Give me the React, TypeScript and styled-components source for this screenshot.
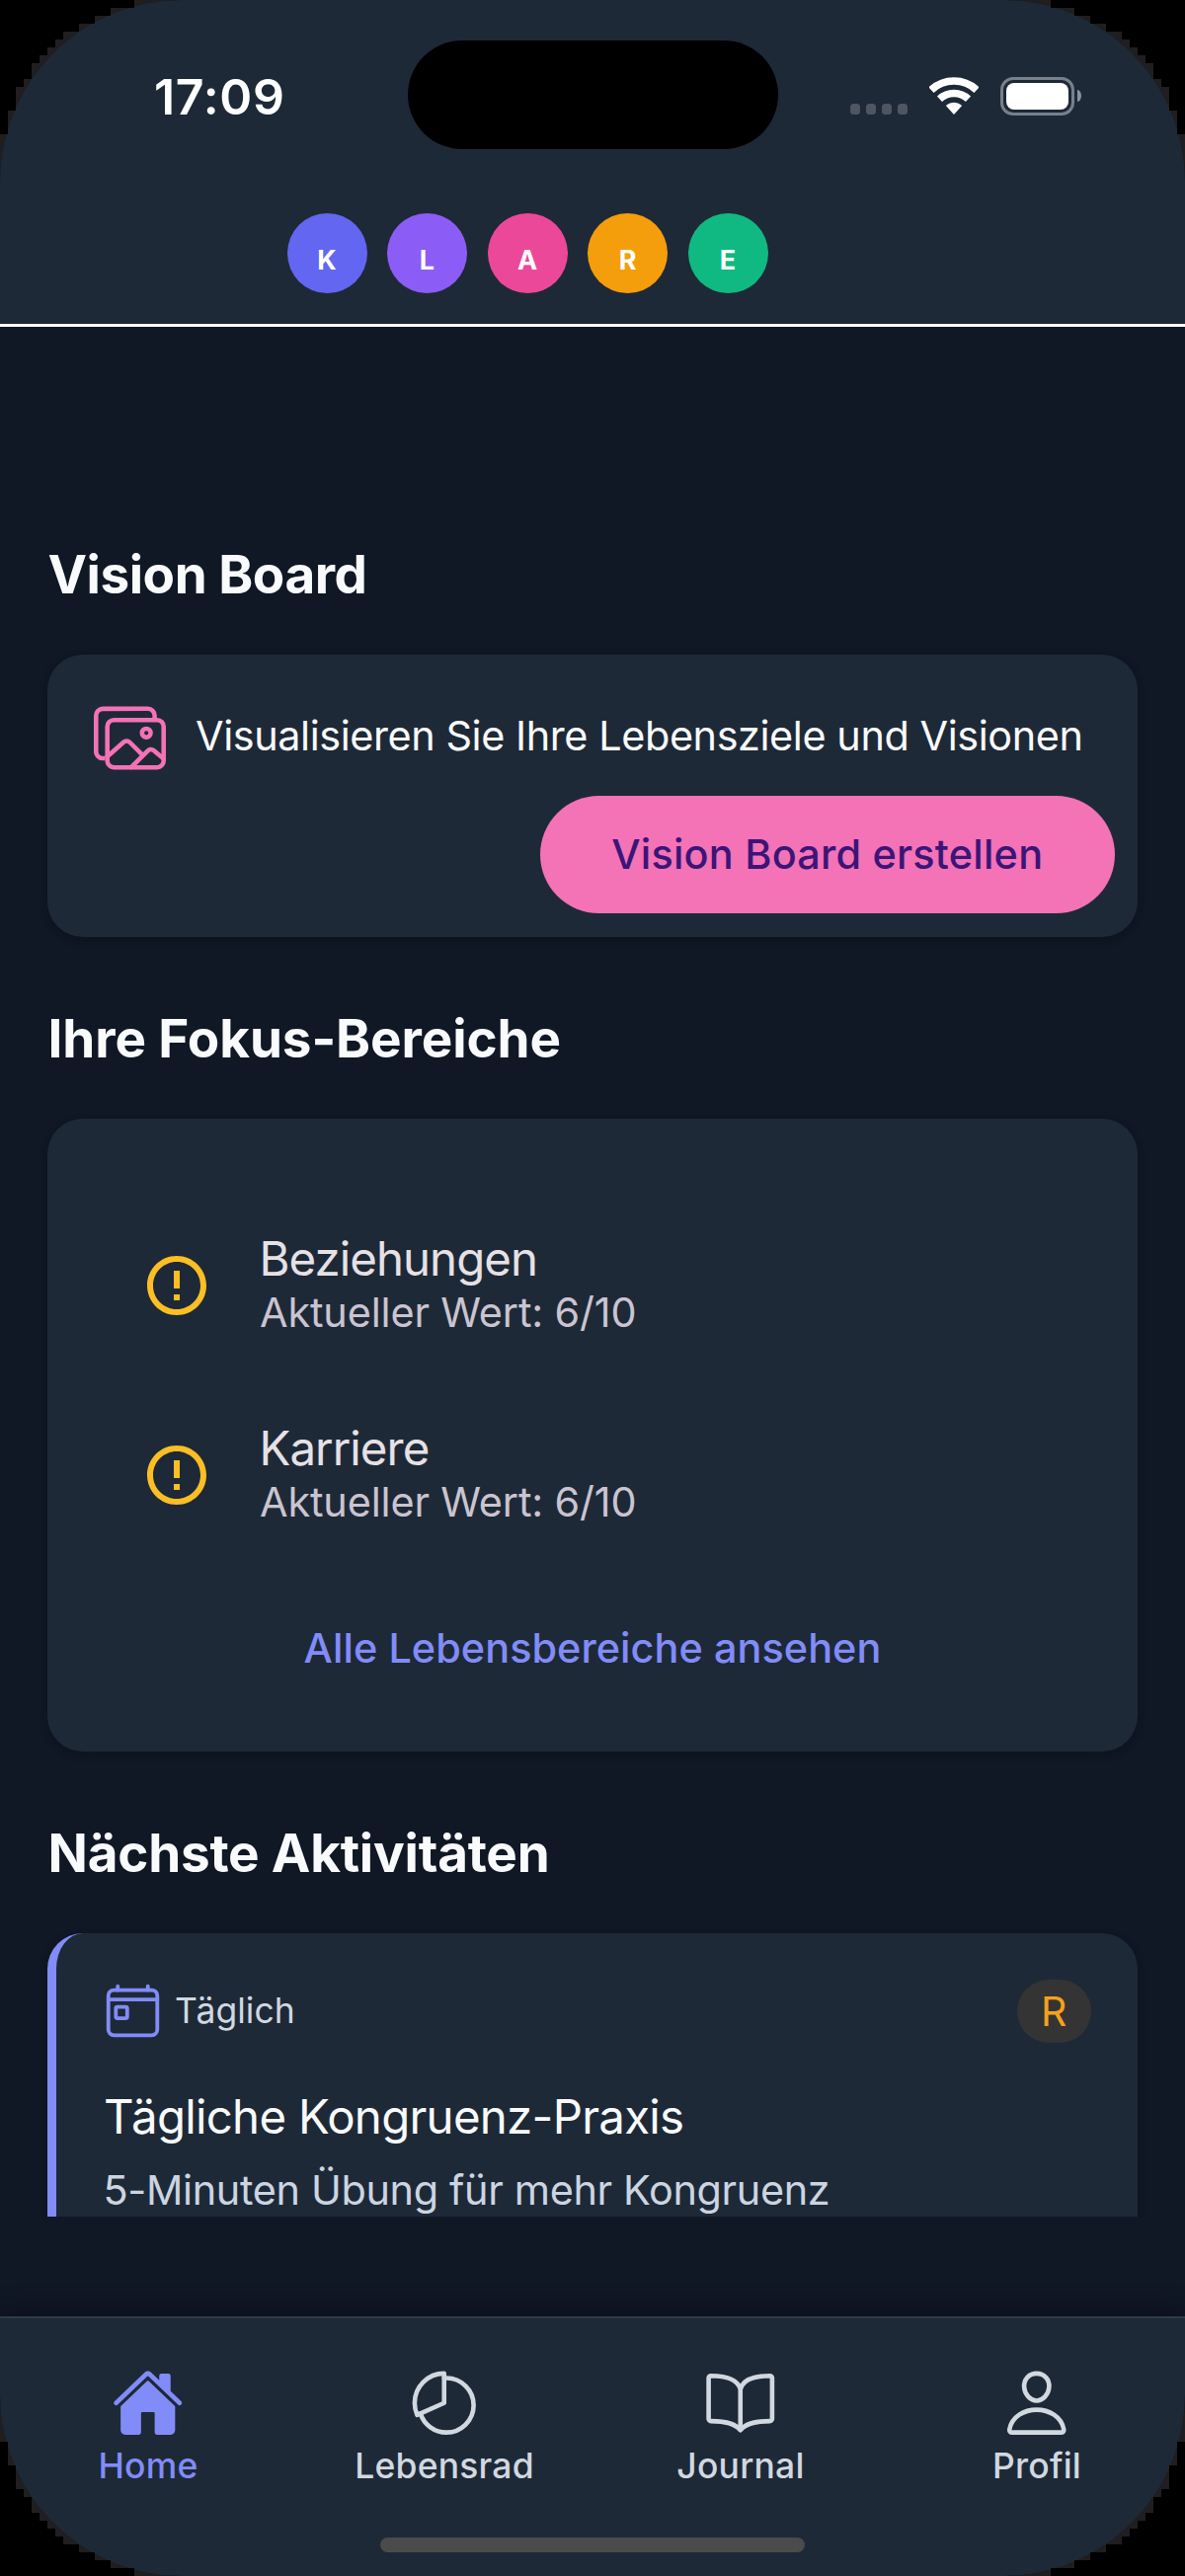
import React from "react";
import styled, { createGlobalStyle } from "styled-components";
import {
  IoBookOutline,
  IoHome,
  IoImagesOutline,
  IoPersonOutline,
  IoPieChartOutline,
  IoTodayOutline,
} from "react-icons/io5";
import { MdErrorOutline } from "react-icons/md";

const color = {
  page: "#101725",
  surface: "#1e2937",
  text: "#f9fafb",
  listTitle: "#e6e1e5",
  listText: "#cac4d0",
  muted: "#d1d8e0",
  primary: "#818cf8",
  pink: "#f472b6",
  warning: "#fbbf24",
};

const WIDTH = 1200;
const HEIGHT = 2609;

// Stepped outline of the top-left corner; the other three corners mirror it.
const cornerSteps: [number, number][] = [
  [0, 136], [8, 136], [8, 112], [16, 112], [16, 88], [24, 88], [24, 80], [32, 80],
  [32, 64], [40, 64], [40, 56], [48, 56], [48, 48], [56, 48], [56, 40], [64, 40],
  [64, 32], [80, 32], [80, 24], [96, 24], [96, 16], [112, 16], [112, 8], [136, 8], [136, 0],
];
const reversedSteps = [...cornerSteps].reverse();
const outline = [
  ...cornerSteps,
  ...reversedSteps.map(([x, y]) => [WIDTH - x, y]),
  ...cornerSteps.map(([x, y]) => [WIDTH - x, HEIGHT - y]),
  ...reversedSteps.map(([x, y]) => [x, HEIGHT - y]),
]
  .map(([x, y]) => `${x}px ${y}px`)
  .join(", ");

const GlobalStyle = createGlobalStyle`
  * { box-sizing: border-box; }
  body {
    margin: 0;
    background: #000;
    font-family: Inter, "Liberation Sans", sans-serif;
  }
`;

const Bezel = styled.div`
  width: ${WIDTH}px;
  height: ${HEIGHT}px;
  background: #201e1e;
  clip-path: polygon(${outline});
`;

const Phone = styled.div`
  height: 100%;
  display: flex;
  flex-direction: column;
  overflow: hidden;
  border-radius: 184px;
  background: ${color.page};
`;

const Header = styled.header`
  flex: none;
  height: 331px;
  border-bottom: 3px solid #fff;
  background: ${color.surface};
`;

const StatusBar = styled.div`
  height: 192px;
  display: grid;
  grid-template-columns: 1fr 375px 1fr;
  align-items: center;
`;

const Time = styled.div`
  padding: 3px 0 0 156px;
  color: #fff;
  font-size: 50px;
  font-weight: 600;
  line-height: 60px;
  letter-spacing: 0.7px;
`;

const Island = styled.div`
  height: 110px;
  border-radius: 55px;
  background: #000;
`;

const StatusIcons = styled.div`
  display: flex;
  align-items: center;
  padding: 2px 0 0 73px;
`;

const SignalDots = styled.div`
  display: flex;
  gap: 6px;
  margin: 27px 22px 0 0;
`;

const SignalDot = styled.span`
  width: 10px;
  height: 11px;
  border-radius: 3.5px;
  background: #4d5661;
`;

const WifiIcon = styled.svg`
  width: 50px;
  height: 38px;
  margin-right: 22px;
`;

const BatteryShell = styled.div`
  width: 75px;
  height: 39px;
  padding: 3px;
  border: 3px solid #77808b;
  border-radius: 13px;
`;

const BatteryFill = styled.div`
  height: 100%;
  border-radius: 8px;
  background: #fff;
`;

const BatteryTip = styled.div`
  width: 4px;
  height: 12px;
  margin-left: 3px;
  border-radius: 0 4px 4px 0 / 0 6px 6px 0;
  background: #8a929b;
`;

const PillarRow = styled.div`
  display: flex;
  gap: 20.5px;
  padding: 24px 0 0 290.5px;
`;

const Pillar = styled.div<{ $bg: string }>`
  width: 81px;
  height: 81px;
  display: flex;
  align-items: center;
  justify-content: center;
  padding-top: 14px;
  border-radius: 50%;
  background: ${(p) => p.$bg};
  color: #fff;
  font-size: 27px;
  font-weight: 700;
  line-height: 32px;
`;

const Content = styled.main`
  flex: none;
  height: 1914px;
  overflow: hidden;
  padding: 218.5px 48px 0;
`;

const Section = styled.section`
  margin-bottom: 71px;
`;

const Heading = styled.h2<{ $spacing: number }>`
  margin: 0 0 49px;
  padding-left: 0.5px;
  color: ${color.text};
  font-size: 53px;
  font-weight: 700;
  line-height: 64px;
  letter-spacing: ${(p) => p.$spacing}px;
`;

const Card = styled.div`
  border-radius: 36px;
  background: ${color.surface};
  box-shadow: 0 3px 9px rgba(0, 12, 12, 0.3);
`;

const VisionCard = styled(Card)`
  display: flex;
  flex-direction: column;
  padding: 48px 23.5px 23.5px 47px;
`;

const VisionRow = styled.div`
  display: flex;
  align-items: center;
  gap: 30px;
  margin-bottom: 22px;
  color: ${color.pink};
`;

const VisionText = styled.span`
  padding-bottom: 4px;
  color: ${color.text};
  font-size: 41.4px;
  line-height: 50px;
  letter-spacing: -0.42px;
  white-space: nowrap;
`;

const VisionButton = styled.button`
  align-self: flex-end;
  width: 581.5px;
  height: 119.5px;
  padding: 0;
  border: 0;
  border-radius: 60px;
  background: ${color.pink};
  color: #3b1578;
  font: 500 41.4px/50px Inter, "Liberation Sans", sans-serif;
  letter-spacing: 0.23px;
`;

const FocusCard = styled(Card)`
  display: flex;
  flex-direction: column;
  align-items: center;
  height: 641px;
  padding-top: 73px;
`;

const FocusRow = styled.div`
  align-self: stretch;
  height: 192px;
  display: flex;
  align-items: center;
  gap: 47.5px;
  padding-left: 95px;
  color: ${color.warning};
`;

const FocusTitle = styled.div`
  color: ${color.listTitle};
  font-size: 47.4px;
  line-height: 57px;
  letter-spacing: -0.95px;
`;

const FocusValue = styled.div`
  padding: 1px 0 3px 0.5px;
  color: ${color.listText};
  font-size: 41.4px;
  line-height: 50px;
  letter-spacing: -0.15px;
`;

const FocusLink = styled.a`
  margin-top: 54.5px;
  color: ${color.primary};
  font-size: 41.4px;
  font-weight: 500;
  line-height: 50px;
  letter-spacing: 0.05px;
`;

const ActivityCard = styled(Card)`
  height: 440px;
  padding: 47.5px 47.5px 0 47px;
  border-left: 9px solid ${color.primary};
`;

const ActivityTop = styled.div`
  height: 63.5px;
  display: flex;
  align-items: center;
  gap: 12px;
  margin-bottom: 46px;
  color: ${color.primary};
`;

const Frequency = styled.span`
  flex: 1;
  color: ${color.muted};
  font-size: 35.5px;
  line-height: 43px;
`;

const ActivityBadge = styled.span`
  width: 74.5px;
  height: 63.5px;
  display: flex;
  align-items: center;
  justify-content: center;
  border-radius: 36px;
  background: #333433;
  color: #f5a11b;
  font-size: 41px;
  line-height: 50px;
`;

const ActivityTitle = styled.div`
  margin-bottom: 21.5px;
  padding-left: 1px;
  color: ${color.text};
  font-size: 47.4px;
  line-height: 57px;
  letter-spacing: -0.72px;
`;

const ActivityText = styled.div`
  padding-left: 0.5px;
  color: #cbd5e1;
  font-size: 41.4px;
  line-height: 50px;
  letter-spacing: -0.34px;
`;

const TabBar = styled.nav`
  flex: none;
  height: 263px;
  margin-top: auto;
  border-top: 2px solid #303a47;
  background: ${color.surface};
  box-shadow: 0 -6px 24px rgba(0, 0, 0, 0.3);
`;

const Tabs = styled.div`
  display: grid;
  grid-template-columns: repeat(4, 1fr);
  padding-top: 48.5px;
`;

const Tab = styled.div<{ $active?: boolean }>`
  display: flex;
  flex-direction: column;
  align-items: center;
  gap: 6px;
  color: ${(p) => (p.$active ? color.primary : color.muted)};
`;

const TabLabel = styled.span`
  font-size: 35.5px;
  font-weight: 500;
  line-height: 43px;
  letter-spacing: 0.2px;
`;

const HomeIndicator = styled.div`
  width: 430px;
  height: 15px;
  margin: 51px auto 0;
  border-radius: 8px;
  background: #4b4b4b;
`;

const pillars = [
  { letter: "K", bg: "#6366f1" },
  { letter: "L", bg: "#8b5cf6" },
  { letter: "A", bg: "#ec4899" },
  { letter: "R", bg: "#f59e0b" },
  { letter: "E", bg: "#10b981" },
];

const focusAreas = [
  { name: "Beziehungen", value: "Aktueller Wert: 6/10" },
  { name: "Karriere", value: "Aktueller Wert: 6/10" },
];

const tabs = [
  { label: "Home", Icon: IoHome, active: true },
  { label: "Lebensrad", Icon: IoPieChartOutline },
  { label: "Journal", Icon: IoBookOutline },
  { label: "Profil", Icon: IoPersonOutline },
];

export default function App() {
  return (
    <Bezel>
      <GlobalStyle />
      <Phone>
        <Header>
          <StatusBar>
            <Time>17:09</Time>
            <Island />
            <StatusIcons>
              <SignalDots>
                <SignalDot />
                <SignalDot />
                <SignalDot />
                <SignalDot />
              </SignalDots>
              <WifiIcon viewBox="0 0 50 38" fill="none" stroke="#fff">
                <path d="M2 13.1A33.7 33.7 0 0 1 48 13.1" strokeWidth="7.6" />
                <path d="M10.5 22.2A21.2 21.2 0 0 1 39.5 22.2" strokeWidth="7.4" />
                <path
                  d="M25 37L17.8 29.1A11 11 0 0 1 32.2 29.1Z"
                  fill="#fff"
                  strokeWidth="1.4"
                  strokeLinejoin="round"
                />
              </WifiIcon>
              <BatteryShell>
                <BatteryFill />
              </BatteryShell>
              <BatteryTip />
            </StatusIcons>
          </StatusBar>
          <PillarRow>
            {pillars.map((p) => (
              <Pillar key={p.letter} $bg={p.bg}>
                {p.letter}
              </Pillar>
            ))}
          </PillarRow>
        </Header>

        <Content>
          <Section>
            <Heading $spacing={-0.47}>Vision Board</Heading>
            <VisionCard>
              <VisionRow>
                <IoImagesOutline size={73} />
                <VisionText>Visualisieren Sie Ihre Lebensziele und Visionen</VisionText>
              </VisionRow>
              <VisionButton>Vision Board erstellen</VisionButton>
            </VisionCard>
          </Section>

          <Section>
            <Heading $spacing={-0.09}>Ihre Fokus-Bereiche</Heading>
            <FocusCard>
              {focusAreas.map((area) => (
                <FocusRow key={area.name}>
                  <MdErrorOutline size={72} />
                  <div>
                    <FocusTitle>{area.name}</FocusTitle>
                    <FocusValue>{area.value}</FocusValue>
                  </div>
                </FocusRow>
              ))}
              <FocusLink>Alle Lebensbereiche ansehen</FocusLink>
            </FocusCard>
          </Section>

          <Section>
            <Heading $spacing={-0.22}>Nächste Aktivitäten</Heading>
            <ActivityCard>
              <ActivityTop>
                <IoTodayOutline size={61} />
                <Frequency>Täglich</Frequency>
                <ActivityBadge>R</ActivityBadge>
              </ActivityTop>
              <ActivityTitle>Tägliche Kongruenz-Praxis</ActivityTitle>
              <ActivityText>5-Minuten Übung für mehr Kongruenz</ActivityText>
            </ActivityCard>
          </Section>
        </Content>

        <TabBar>
          <Tabs>
            {tabs.map(({ label, Icon, active }) => (
              <Tab key={label} $active={active}>
                <Icon size={73.5} />
                <TabLabel>{label}</TabLabel>
              </Tab>
            ))}
          </Tabs>
          <HomeIndicator />
        </TabBar>
      </Phone>
    </Bezel>
  );
}
